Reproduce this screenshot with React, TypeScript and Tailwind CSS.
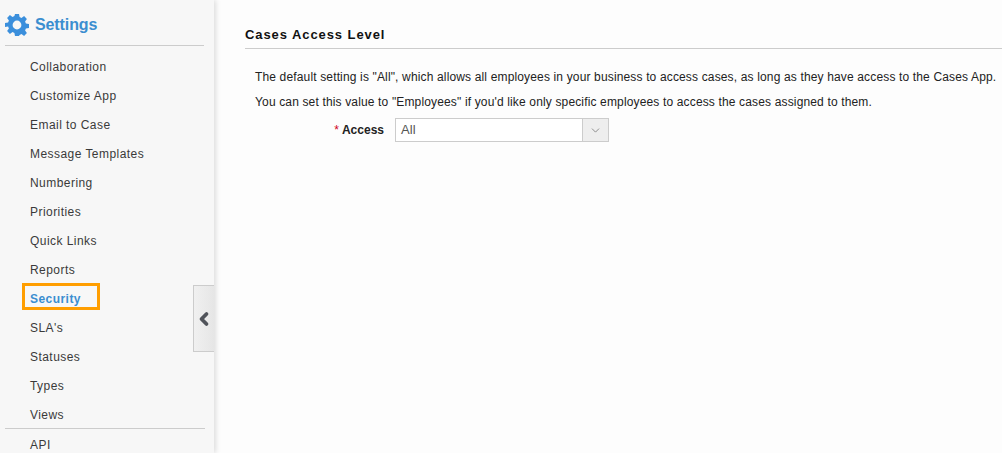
import { ChevronLeft, ChevronDown } from 'lucide-react'

const MENU_ITEMS = [
  'Collaboration',
  'Customize App',
  'Email to Case',
  'Message Templates',
  'Numbering',
  'Priorities',
  'Quick Links',
  'Reports',
  'Security',
  "SLA's",
  'Statuses',
  'Types',
  'Views',
]

function GearIcon() {
  return (
    <svg viewBox="0 0 24 24" className="h-[24px] w-[24px]" fill="#3b8fdc">
      <path d="M10 1h4l.6 3.1 1.9.8 2.6-1.8 2.8 2.8-1.8 2.6.8 1.9 3.1.6v4l-3.1.6-.8 1.9 1.8 2.6-2.8 2.8-2.6-1.8-1.9.8L14 23h-4l-.6-3.1-1.9-.8-2.6 1.8-2.8-2.8 1.8-2.6-.8-1.9L0 14v-4l3.1-.6.8-1.9L2.1 4.9l2.8-2.8 2.6 1.8 1.9-.8L10 1zm2 6.6a4.4 4.4 0 1 0 0 8.8 4.4 4.4 0 0 0 0-8.8z" fillRule="evenodd" />
    </svg>
  )
}

function Sidebar() {
  return (
    <aside className="relative h-full w-[214px] shrink-0 bg-[#f7f7f7] tracking-[0.45px] shadow-[2px_0_5px_rgba(0,0,0,0.13)]">
      <div className="mx-[5px] flex h-[46px] w-[199px] items-center gap-[6px] border-b border-[#cccccc] pt-[4px]">
        <GearIcon />
        <span className="text-[16px] font-bold tracking-[-0.1px] text-[#3b8ed0]">Settings</span>
      </div>

      <ul className="pt-[6px]">
        {MENU_ITEMS.map((item) => (
          <li
            key={item}
            className={
              item === 'Security'
                ? 'relative flex h-[29px] items-center pl-[30px] font-bold text-[#3b8ed0]'
                : 'flex h-[29px] items-center pl-[30px] text-[#3a3a3a]'
            }
          >
            {item}
            {item === 'Security' && (
              <span className="absolute left-[22px] top-[-1px] h-[27px] w-[78px] border-[3px] border-[#ff9e00]" />
            )}
          </li>
        ))}
      </ul>

      <div className="mx-[5px] mt-[-1px] w-[200px] border-t border-[#cccccc]" />
      <div className="flex h-[31px] items-center pl-[30px] text-[#3a3a3a]">API</div>

      <button className="absolute left-[193px] top-[285px] flex h-[67px] w-[21px] items-center justify-center border border-r-0 border-[#cccccc] bg-gradient-to-r from-[#f0f0f0] to-[#e6e6e6]">
        <ChevronLeft size={22} strokeWidth={4.5} color="#50535a" />
      </button>
    </aside>
  )
}

function App() {
  return (
    <div className="flex h-[453px] w-[1002px] overflow-hidden bg-[#fdfdfd] font-['Liberation_Sans',Arial,sans-serif] text-[12px]">
      <Sidebar />

      <main className="min-w-0 flex-1 pl-[31px] pt-[25px]">
        <h2 className="h-[24px] whitespace-nowrap border-b border-[#cccccc] pt-[1px] text-[13px] font-bold leading-[18px] tracking-[0.92px] text-[#111111]">
          Cases Access Level
        </h2>

        <div className="pl-[10px] pt-[16px] tracking-[0.15px] text-[#222222]">
          <p className="h-[25px] whitespace-nowrap leading-[25px]">
            The default setting is "All", which allows all employees in your business to access cases, as long as they have access to the Cases App.
          </p>
          <p className="h-[25px] whitespace-nowrap leading-[25px]">
            You can set this value to "Employees" if you'd like only specific employees to access the cases assigned to them.
          </p>

          <div className="mt-[3px] flex h-[24px] items-center">
            <label className="w-[140px] pr-[11px] text-right font-bold tracking-normal text-[#222222]">
              <span className="mr-[3px] font-normal text-[#d0021b]">*</span>
              Access
            </label>
            <div className="flex h-[24px] w-[214px] border border-[#cccccc] bg-white">
              <span className="flex-1 pl-[5px] text-[13px] leading-[22px] text-[#555555]">All</span>
              <span className="flex w-[26px] items-center justify-center border-l border-[#cccccc] bg-[#eeeeee]">
                <ChevronDown size={13} strokeWidth={1.5} color="#777777" />
              </span>
            </div>
          </div>
        </div>
      </main>
    </div>
  )
}

export default App
